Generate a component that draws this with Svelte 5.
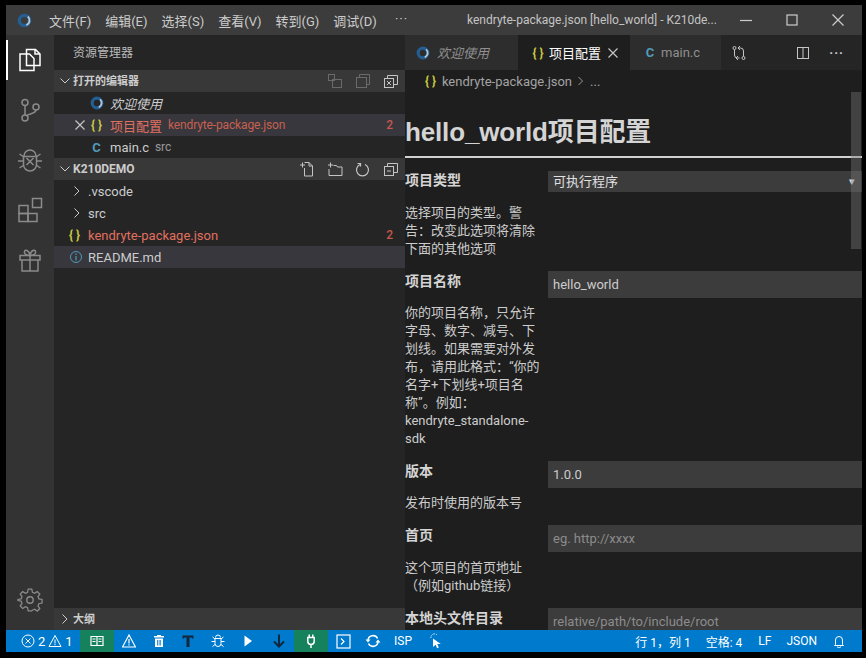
<script>
  const menus = ['文件(F)', '编辑(E)', '选择(S)', '查看(V)', '转到(G)', '调试(D)'];
  const fields = [
    { label: '项目名称', value: 'hello_world', desc: '你的项目名称，只允许字母、数字、减号、下划线。如果需要对外发布，请用此格式：“你的名字+下划线+项目名称”。例如：kendryte_standalone-sdk' },
    { label: '版本', value: '1.0.0', desc: '发布时使用的版本号' },
    { label: '首页', hint: 'eg. http://xxxx', desc: '这个项目的首页地址（例如github链接）' },
    { label: '本地头文件目录', hint: 'relative/path/to/include/root', desc: '' }
  ];
</script>

{#snippet logo(size)}
  <svg width={size} height={size} viewBox="0 0 16 16">
    <circle cx="8" cy="8" r="5.500" fill="none" stroke="#245f94" stroke-width="3.600" />
    <path d="M11.500 3.800A5.500 5.500 0 0 1 10 13" fill="none" stroke="#b4c8d8" stroke-width="2" />
  </svg>
{/snippet}

<div class="frame">
  <div class="window">
    <header class="titlebar">
      <span class="app-logo">{@render logo(15)}</span>
      <nav class="menu">
        {#each menus as m}<span>{m}</span>{/each}
        <span class="more">···</span>
      </nav>
      <div class="title">kendryte-package.json [hello_world] - K210de...</div>
      <div class="winctl">
        <svg width="14" height="14" viewBox="0 0 14 14"><path d="M1 7.500h12" stroke="#ccc" stroke-width="1.200" /></svg>
        <svg width="14" height="14" viewBox="0 0 14 14"><rect x="2" y="2" width="10" height="10" fill="none" stroke="#ccc" stroke-width="1.200" /></svg>
        <svg width="14" height="14" viewBox="0 0 14 14"><path d="M1.500 1.500l11 11M12.500 1.500l-11 11" stroke="#ccc" stroke-width="1.200" /></svg>
      </div>
    </header>

    <div class="main">
      <aside class="activity">
        <div class="act active">
          <svg width="26" height="26" viewBox="0 0 26 26" fill="none" stroke="#fff" stroke-width="1.500"><path d="M9.500 7V2.500h9l4.500 4.500v11.500h-6" /><path d="M18 2.500V7h5" /><path d="M9.500 7H3v16.500h14V11.500L12.500 7z" fill="#333" /><path d="M9.500 7v11.500H17" /></svg>
        </div>
        <div class="act">
          <svg width="26" height="26" viewBox="0 0 26 26" fill="none" stroke="#8b8b8b" stroke-width="1.500"><circle cx="8" cy="5.500" r="3" /><circle cx="8" cy="21" r="3" /><circle cx="19" cy="10" r="3" /><path d="M8 8.500V18M19 13c0 4-7 3-10 6" /></svg>
        </div>
        <div class="act">
          <svg width="26" height="26" viewBox="0 0 26 26" fill="none" stroke="#8b8b8b" stroke-width="1.500"><path d="M7 9a6 6 0 0 1 12 0" /><path d="M6.500 9.500h13v8a6.500 6.500 0 0 1-13 0z" /><path d="M9.500 11l7 7M16.500 11l-7 7M1 14h5.500M19.500 14H25M2.500 7l4.500 3M23.500 7L19 10M2.500 21l4.500-3M23.500 21L19 18" /></svg>
        </div>
        <div class="act">
          <svg width="26" height="26" viewBox="0 0 26 26" fill="none" stroke="#8b8b8b" stroke-width="1.500"><rect x="15.500" y="1.500" width="9" height="9" /><rect x="2" y="8.500" width="9" height="8" /><rect x="2" y="16.500" width="9" height="8" /><rect x="11" y="16.500" width="9" height="8" /></svg>
        </div>
        <div class="act">
          <svg width="26" height="26" viewBox="0 0 26 26" fill="none" stroke="#8b8b8b" stroke-width="1.500"><rect x="3" y="8.500" width="20" height="4.500" /><path d="M5 13v11h16V13M13 8.500V24M13 8.500C9 8.500 7 7 7.500 4.500S12 3 13 8.500c1-5.500 5-6.500 5.500-4S17 8.500 13 8.500z" /></svg>
        </div>
        <div class="act gear">
          <svg width="26" height="26" viewBox="0 0 26 26" fill="none" stroke="#8b8b8b" stroke-width="1.400"><circle cx="13" cy="13" r="3.200" /><path d="M11 1h4l.7 3.500 2.400 1 3-2 2.800 2.800-2 3 1 2.400 3.500.7v4l-3.500.7-1 2.400 2 3-2.800 2.800-3-2-2.400 1L15 25h-4l-.7-3.500-2.400-1-3 2L2.100 19.700l2-3-1-2.400L-.4 13.600v-1.200l3.500-.7 1-2.400-2-3 2.800-2.800 3 2 2.400-1z" transform="translate(1.300 1.300) scale(.9)" /></svg>
        </div>
      </aside>

      <section class="sidebar">
        <div class="side-title">资源管理器</div>

        <div class="sec">
          <svg class="chev" width="12" height="12" viewBox="0 0 12 12"><path d="M1.500 3.500L6 8l4.500-4.500" fill="none" stroke="#ccc" /></svg>
          <b>打开的编辑器</b>
          <span class="sec-actions">
            <svg width="16" height="16" viewBox="0 0 16 16" fill="none" stroke="#6a6a6a"><rect x="1.500" y="1.500" width="6" height="6" /><rect x="5.500" y="6.500" width="9" height="8" /></svg>
            <svg width="16" height="16" viewBox="0 0 16 16" fill="none" stroke="#6a6a6a"><rect x="1.500" y="4.500" width="10" height="10" /><path d="M4.500 4.500v-3h10v10h-3" /></svg>
            <svg width="16" height="16" viewBox="0 0 16 16" fill="none" stroke="#c5c5c5"><rect x="1.500" y="5.500" width="9" height="9" /><path d="M4.500 5.500v-3h10v9h-4M4 8l4 4M8 8l-4 4" /></svg>
          </span>
        </div>
        <div class="row open">
          <span class="ico">{@render logo(14)}</span>
          <span class="name italic">欢迎使用</span>
        </div>
        <div class="row open selected">
          <svg class="x" width="12" height="12" viewBox="0 0 12 12"><path d="M1.500 1.500l9 9M10.500 1.500l-9 9" stroke="#c5c5c5" stroke-width="1.200" /></svg>
          <span class="ico json">{'{ }'}</span>
          <span class="name err">项目配置</span>
          <span class="path err">kendryte-package.json</span>
          <span class="badge">2</span>
        </div>
        <div class="row open">
          <span class="ico cfile">C</span>
          <span class="name">main.c</span>
          <span class="path">src</span>
        </div>

        <div class="sec">
          <svg class="chev" width="12" height="12" viewBox="0 0 12 12"><path d="M1.500 3.500L6 8l4.500-4.500" fill="none" stroke="#ccc" /></svg>
          <b class="latin">K210DEMO</b>
          <span class="sec-actions">
            <svg width="16" height="16" viewBox="0 0 16 16" fill="none" stroke="#c5c5c5"><path d="M1 4h5M3.500 1.500v5M5.500 1.500h4.500l3.500 3.500v10H5.500V7" /><path d="M10 1.500V5h3.500" /></svg>
            <svg width="16" height="16" viewBox="0 0 16 16" fill="none" stroke="#c5c5c5"><path d="M1 4h5M3.500 1.500v5M6.500 4.500h3l1 1.500h4.500v8.500H2V8" /></svg>
            <svg width="16" height="16" viewBox="0 0 16 16" fill="none" stroke="#c5c5c5" stroke-width="1.200"><path d="M5 3.500a6 6 0 1 0 5 0" /><path d="M2.500 2.500h3v3" /></svg>
            <svg width="16" height="16" viewBox="0 0 16 16" fill="none" stroke="#c5c5c5"><rect x="1.500" y="5.500" width="9" height="9" /><path d="M4.500 5.500v-3h10v9h-4M4 10h4" /></svg>
          </span>
        </div>
        <div class="row tree">
          <svg class="chev2" width="12" height="12" viewBox="0 0 12 12"><path d="M3.500 1.500L8 6l-4.500 4.500" fill="none" stroke="#ccc" /></svg>
          <span class="name">.vscode</span>
        </div>
        <div class="row tree">
          <svg class="chev2" width="12" height="12" viewBox="0 0 12 12"><path d="M3.500 1.500L8 6l-4.500 4.500" fill="none" stroke="#ccc" /></svg>
          <span class="name">src</span>
        </div>
        <div class="row tree">
          <span class="ico2 json">{'{ }'}</span>
          <span class="name err">kendryte-package.json</span>
          <span class="badge">2</span>
        </div>
        <div class="row tree focused">
          <svg class="ico2" width="14" height="14" viewBox="0 0 14 14" fill="none"><circle cx="7" cy="7" r="5.500" stroke="#519aba" /><path d="M7 6v4.500M7 3.500v1.500" stroke="#519aba" stroke-width="1.200" /></svg>
          <span class="name">README.md</span>
        </div>

        <div class="sec outline">
          <svg class="chev" width="12" height="12" viewBox="0 0 12 12"><path d="M3.500 1.500L8 6l-4.500 4.500" fill="none" stroke="#ccc" /></svg>
          <b>大纲</b>
        </div>
      </section>

      <section class="editor">
        <div class="tabs">
          <div class="tab welcome">
            <span class="tab-ico">{@render logo(14)}</span>
            <span class="italic">欢迎使用</span>
          </div>
          <div class="tab current">
            <span class="tab-ico json">{'{ }'}</span>
            <span>项目配置</span>
            <svg class="tab-x" width="12" height="12" viewBox="0 0 12 12"><path d="M1.500 1.500l9 9M10.500 1.500l-9 9" stroke="#c5c5c5" stroke-width="1.200" /></svg>
          </div>
          <div class="tab cmain">
            <span class="tab-ico cfile">C</span>
            <span>main.c</span>
          </div>
          <div class="tab-actions">
            <svg width="16" height="16" viewBox="0 0 16 16" fill="none" stroke="#c5c5c5"><circle cx="3.500" cy="3" r="1.500" /><circle cx="12.500" cy="13" r="1.500" /><path d="M3.500 4.500V10q0 3 3 3h2M7 11l-2 2 2 2" /><path d="M12.500 11.500V6q0-3-3-3h-2M9 1L7 3l2 2" /></svg>
            <span class="spacer"></span>
            <svg width="16" height="16" viewBox="0 0 16 16" fill="none" stroke="#c5c5c5"><rect x="2.500" y="2.500" width="11" height="11" /><path d="M8 2.500v11" /></svg>
            <span class="dots">···</span>
          </div>
        </div>
        <div class="crumbs">
          <span class="json">{'{ }'}</span>
          <span>kendryte-package.json</span>
          <svg width="8" height="10" viewBox="0 0 8 10"><path d="M1.500 1L5.500 5l-4 4" fill="none" stroke="#999" /></svg>
          <span>...</span>
        </div>
        <div class="doc">
          <h1>hello_world项目配置</h1>
          <div class="fields">
            <div class="field first">
              <div class="info">
                <h2>项目类型</h2>
                <p>选择项目的类型。警告：改变此选项将清除下面的其他选项</p>
              </div>
              <div class="select">可执行程序<span class="caret">▾</span></div>
            </div>
            {#each fields as f}
              <div class="field">
                <div class="info">
                  <h2>{f.label}</h2>
                  {#if f.desc}<p>{f.desc}</p>{/if}
                </div>
                <div class="input" class:hint={f.hint}>{f.value || f.hint}</div>
              </div>
            {/each}
          </div>
          <div class="scroll"></div>
        </div>
      </section>
    </div>

    <footer class="status">
      <div class="st errs">
        <svg width="14" height="14" viewBox="0 0 14 14" fill="none" stroke="#fff"><circle cx="7" cy="7" r="6" /><path d="M4.500 4.500l5 5M9.500 4.500l-5 5" /></svg>
        <span>2</span>
        <svg width="14" height="14" viewBox="0 0 14 14" fill="none" stroke="#fff"><path d="M7 1.500L13 12.500H1zM7 5.500v4M7 10v1.200" /></svg>
        <span>1</span>
      </div>
      <div class="st w34 green"><svg width="14" height="14" viewBox="0 0 14 14" fill="none" stroke="#fff" stroke-width="1.200"><path d="M1 2.500h12v9H1zM7 2.500v9M2.500 5h3M2.500 7.500h3M8.500 5h3M8.500 7.500h3" /></svg></div>
      <div class="st w30"><svg width="14" height="14" viewBox="0 0 14 14" fill="none" stroke="#fff" stroke-width="1.200"><path d="M7 1L13.500 13H.5zM7 5v4.500M7 10.200v1.300" /></svg></div>
      <div class="st w29"><svg width="14" height="14" viewBox="0 0 14 14" fill="#fff"><path d="M5 1h4v1h3v1.500H2V2h3zM3 4.500h8V13H3zM5 6v5.500h.8V6zM6.700 6v5.500h.8V6zM8.300 6v5.500h.8V6z" fill-rule="evenodd" /></svg></div>
      <div class="st w30"><svg width="14" height="14" viewBox="0 0 14 14" fill="#10273d"><path d="M1.500 1.500h11v3h-1.500l-.5-1H8.500V13h-3V3.500h-2l-.5 1H1.500z" /></svg></div>
      <div class="st w30"><svg width="14" height="14" viewBox="0 0 14 14" fill="none" stroke="#fff"><path d="M4.500 3.500a2.500 2.500 0 0 1 5 0" /><path d="M4 4.500h6v5a3 3 0 0 1-6 0zM.5 7.500H4M10 7.500h3.500M1.500 3l2.500 2M12.500 3L10 5M1.500 12.500L4 10.500M12.500 12.500L10 10.500" /></svg></div>
      <div class="st w30"><svg width="14" height="14" viewBox="0 0 14 14" fill="#fff"><path d="M3.500 1.500L11 7l-7.500 5.500z" /></svg></div>
      <div class="st w31"><svg width="14" height="14" viewBox="0 0 14 14" fill="none" stroke="#10273d" stroke-width="2"><path d="M7 .5v12M2 7.500l5 5 5-5" /></svg></div>
      <div class="st w34 green"><svg width="14" height="14" viewBox="0 0 14 14" fill="none" stroke="#fff" stroke-width="1.500"><path d="M5.200 .5v3M8.800 .5v3M3.800 3.500h6.400v3.700a3.200 3.200 0 0 1-6.400 0zM7 10.500v3.500" /></svg></div>
      <div class="st w30"><svg width="15" height="15" viewBox="0 0 15 15" fill="none" stroke="#fff" stroke-width="1.200"><rect x="1" y="1" width="13" height="13" /><path d="M5 4.500L8 7.500l-3 3" /></svg></div>
      <div class="st w30"><svg width="16" height="14" viewBox="0 0 16 14" fill="none" stroke="#fff" stroke-width="1.500"><path d="M3 6.500a5 5 0 0 1 9.500-2M13 7.500a5 5 0 0 1-9.500 2" /><path d="M.5 5.500h5L3 8.500zM10.500 8.500h5L13 5.500z" fill="#fff" stroke="none" /></svg></div>
      <div class="st w30">ISP</div>
      <div class="st w36"><svg width="12" height="16" viewBox="0 0 12 16"><path d="M3 5.500v8.500l2.600-2.200 1.500 3.400 1.700-.8-1.500-3.300h3.500z" fill="#fff" /><path d="M1 5a3.500 3.500 0 0 1 6-3" fill="none" stroke="#dcedf8" stroke-dasharray="1.500 1" /></svg></div>
      <div class="st-right">
        <span class="cursor">行 1，列 1</span>
        <span>空格: 4</span>
        <span class="lf">LF</span>
        <span>JSON</span>
        <svg width="14" height="14" viewBox="0 0 14 14" fill="none" stroke="#fff"><path d="M3.500 10.500V6a3.500 3.500 0 0 1 7 0v4.500l1 1h-9zM5.500 12.500a1.500 1.500 0 0 0 3 0" /></svg>
      </div>
    </footer>
  </div>
</div>

<style>
  :global(body) {
    margin: 0;
    background: #000;
  }

  .frame {
    width: 866px;
    height: 658px;
    box-sizing: border-box;
    padding: 5px 4px 6px 6px;
    font-family: Roboto, "Noto Sans CJK SC", sans-serif;
    font-size: 13px;
    color: #ccc;
  }

  .window {
    height: 100%;
    display: flex;
    flex-direction: column;
    overflow: hidden;
  }

  .titlebar {
    height: 30px;
    flex: none;
    display: flex;
    align-items: center;
    background: #3c3c3c;
  }

  .app-logo {
    width: 36px;
    display: flex;
    padding-left: 11px;
    box-sizing: border-box;
  }

  .menu {
    display: flex;
    gap: 14px;
    margin-left: 7px;
    width: 418px;
  }

  .more {
    margin-left: 4px;
    letter-spacing: 1px;
  }

  .title {
    width: 257px;
    white-space: nowrap;
    font-size: 12px;
    color: #c4c4c4;
  }

  .winctl {
    display: flex;
    gap: 32px;
    margin-left: 15px;
  }

  .main {
    flex: 1;
    display: flex;
    min-height: 0;
  }

  .activity {
    width: 48px;
    flex: none;
    display: flex;
    flex-direction: column;
    background: #333;
  }

  .act {
    position: relative;
    height: 50px;
    flex: none;
    display: flex;
    align-items: center;
    justify-content: center;
  }

  .active::before {
    content: "";
    position: absolute;
    left: 0;
    top: 5px;
    bottom: 5px;
    width: 2px;
    background: #fff;
  }

  .gear {
    margin-top: auto;
    margin-bottom: 5px;
  }

  .sidebar {
    width: 351px;
    flex: none;
    display: flex;
    flex-direction: column;
    background: #252526;
  }

  .side-title {
    height: 35px;
    line-height: 37px;
    padding-left: 19px;
    font-size: 12px;
    color: #bbb;
    flex: none;
  }

  .sec {
    height: 22px;
    flex: none;
    display: flex;
    align-items: center;
    background: #383838;
    font-size: 11px;
    padding-left: 5px;
  }

  .sec b {
    margin-left: 2px;
    margin-bottom: 2px;
  }

  .sec .latin {
    font-size: 12px;
    margin-bottom: 0;
  }

  .sec-actions {
    margin-left: auto;
    display: flex;
    gap: 12px;
    margin-right: 6px;
  }

  .outline {
    margin-top: auto;
  }

  .row {
    height: 22px;
    flex: none;
    display: flex;
    align-items: center;
    white-space: nowrap;
  }

  .open {
    padding-left: 56px;
    position: relative;
  }

  .x {
    position: absolute;
    left: 20px;
    top: 5px;
  }

  .ico {
    width: 17px;
    margin-left: -22px;
    margin-right: 5px;
    display: flex;
    justify-content: center;
    font-weight: 700;
  }

  .selected,
  .focused {
    background: #37373d;
  }

  .name {
    color: #ccc;
  }

  .italic {
    font-style: italic;
  }

  .path {
    margin-left: 6px;
    font-size: 12px;
    letter-spacing: -0.14px;
    color: #9a9a9a;
  }

  .name.err {
    color: #e0705f;
  }

  .path.err {
    color: #c8604f;
  }

  .badge {
    margin-left: auto;
    margin-right: 12px;
    font-size: 12px;
    font-weight: 500;
    color: #c4584a;
  }

  .json {
    color: #cbcb41;
    font-weight: 700;
    font-size: 12px;
    white-space: nowrap;
  }

  .cfile {
    color: #519aba;
    font-weight: 700;
  }

  .tree {
    padding-left: 34px;
    position: relative;
  }

  .chev2 {
    position: absolute;
    left: 17px;
    top: 5px;
  }

  .ico2 {
    position: absolute;
    left: 15px;
  }

  .editor {
    flex: 1;
    min-width: 0;
    display: flex;
    flex-direction: column;
    background: #1e1e1e;
  }

  .tabs {
    height: 35px;
    flex: none;
    display: flex;
    background: #252526;
  }

  .tab {
    display: flex;
    align-items: center;
    background: #2d2d2d;
    color: #8f8f8f;
    white-space: nowrap;
    box-sizing: border-box;
  }

  .tab-ico {
    display: flex;
    width: 18px;
    margin-right: 2px;
    justify-content: center;
  }

  .welcome {
    width: 113px;
    padding-left: 9px;
  }

  .welcome .tab-ico {
    margin-right: 5px;
  }

  .current {
    width: 112px;
    padding-left: 11px;
    background: #1e1e1e;
    color: #fff;
  }

  .tab-x {
    margin-left: 6px;
  }

  .cmain {
    width: 91px;
    padding-left: 11px;
  }

  .tab-actions {
    flex: 1;
    display: flex;
    align-items: center;
    padding-left: 10px;
    padding-right: 18px;
  }

  .spacer {
    flex: 1;
  }

  .dots {
    margin-left: 18px;
    letter-spacing: 1px;
    font-weight: 700;
  }

  .crumbs {
    height: 22px;
    flex: none;
    display: flex;
    align-items: center;
    gap: 5px;
    padding-left: 20px;
    color: #a3a3a3;
  }

  .crumbs span:nth-child(2) {
    margin-left: 1px;
  }

  .doc {
    position: relative;
    flex: 1;
    min-height: 0;
    overflow: hidden;
  }

  h1 {
    margin: 0;
    height: 66px;
    box-sizing: border-box;
    border-bottom: 2px solid #d0d0d0;
    font-family: "Liberation Sans", "Noto Sans CJK SC", sans-serif;
    font-size: 26px;
    letter-spacing: -0.15px;
    line-height: 80px;
    font-weight: 700;
    color: #d4d4d4;
    white-space: nowrap;
  }

  .fields {
    padding-top: 14px;
  }

  .field {
    display: grid;
    grid-template-columns: 143px 1fr;
    padding-bottom: 15px;
    align-items: start;
  }

  .info {
    width: 135px;
  }

  h2 {
    margin: 0 0 15px;
    font-size: 14px;
    line-height: 16px;
    font-weight: 700;
    color: #d4d4d4;
  }

  .first h2,
  .field:nth-child(4) h2 {
    margin-bottom: 16px;
  }

  p {
    margin: 0;
    line-height: 18px;
    color: #ccc;
  }

  .select,
  .input {
    box-sizing: border-box;
    background: #3c3c3c;
    padding-left: 5px;
    color: #ccc;
  }

  .select {
    position: relative;
    height: 21px;
    line-height: 21px;
    margin-top: -1px;
    color: #e0e0e0;
  }

  .caret {
    position: absolute;
    right: 7px;
    top: 0;
    font-size: 11px;
  }

  .input {
    height: 27px;
    line-height: 27px;
    margin-top: -2px;
  }

  .hint {
    color: #8c8c8c;
  }

  .scroll {
    position: absolute;
    right: 1px;
    top: 0;
    width: 10px;
    height: 157px;
    background: rgba(121, 121, 121, 0.4);
  }

  .status {
    height: 22px;
    flex: none;
    display: flex;
    align-items: center;
    background: #007acc;
    color: #fff;
    font-size: 12px;
  }

  .st {
    height: 100%;
    flex: none;
    display: flex;
    align-items: center;
    justify-content: center;
    gap: 3px;
    box-sizing: border-box;
  }

  .errs {
    width: 74px;
    justify-content: flex-start;
    padding-left: 15px;
    font-size: 13px;
  }

  .w29 { width: 29px; }
  .w30 { width: 30px; }
  .w31 { width: 31px; }
  .w34 { width: 34px; }
  .w36 { width: 36px; }

  .green {
    background: #16825d;
  }

  .st-right {
    margin-left: auto;
    display: flex;
    align-items: center;
    gap: 15px;
    padding-right: 16px;
  }

  .lf {
    margin-left: 1px;
  }
</style>
